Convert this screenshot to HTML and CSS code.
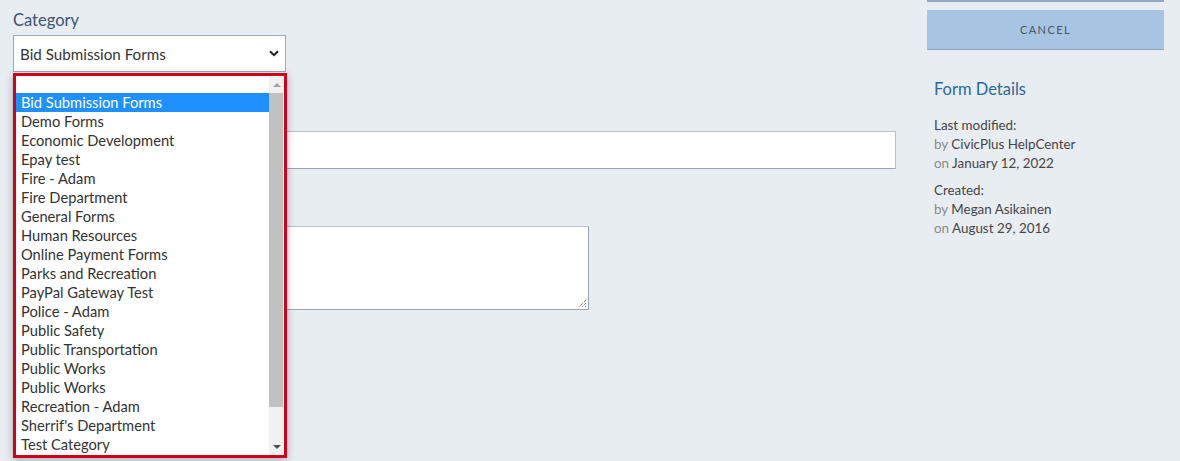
FILE: index.html
```html
<!DOCTYPE html>
<html>
<head>
<meta charset="utf-8">
<link rel="stylesheet" href="styles.css">
</head>
<body>
<div class="page">
  <div class="main">
    <div class="label">Category</div>
    <div class="select-wrap">
      <div class="select">
        <span class="select-value">Bid Submission Forms</span>
        <svg class="chev" width="10" height="7" viewBox="0 0 10 7"><path d="M1 1.2 L5 5.2 L9 1.2" fill="none" stroke="#222" stroke-width="2"/></svg>
      </div>
      <div class="dropdown">
        <div class="options">
          <div class="opt blank"></div>
          <div class="opt selected">Bid Submission Forms</div>
          <div class="opt">Demo Forms</div>
          <div class="opt">Economic Development</div>
          <div class="opt">Epay test</div>
          <div class="opt">Fire - Adam</div>
          <div class="opt">Fire Department</div>
          <div class="opt">General Forms</div>
          <div class="opt">Human Resources</div>
          <div class="opt">Online Payment Forms</div>
          <div class="opt">Parks and Recreation</div>
          <div class="opt">PayPal Gateway Test</div>
          <div class="opt">Police - Adam</div>
          <div class="opt">Public Safety</div>
          <div class="opt">Public Transportation</div>
          <div class="opt">Public Works</div>
          <div class="opt">Public Works</div>
          <div class="opt">Recreation - Adam</div>
          <div class="opt">Sherrif's Department</div>
          <div class="opt">Test Category</div>
        </div>
        <div class="scrollbar">
          <div class="arrow up"></div>
          <div class="track"><div class="thumb"></div></div>
          <div class="arrow down"></div>
        </div>
      </div>
    </div>
    <div class="input"></div>
    <div class="textarea">
      <svg class="grip" width="9" height="9" viewBox="0 0 9 9"><path d="M8 1 L1 8 M8 4 L4 8 M8 7 L7 8" stroke="#555" stroke-width="1" stroke-dasharray="1 1"/></svg>
    </div>
  </div>
  <div class="side">
    <div class="topbar"></div>
    <div class="cancel">CANCEL</div>
    <div class="details">
      <div class="details-title">Form Details</div>
      <div class="meta">
        <div class="meta-head">Last modified:</div>
        <div><span class="muted">by</span> CivicPlus HelpCenter</div>
        <div><span class="muted">on</span> January 12, 2022</div>
      </div>
      <div class="meta">
        <div class="meta-head">Created:</div>
        <div><span class="muted">by</span> Megan Asikainen</div>
        <div><span class="muted">on</span> August 29, 2016</div>
      </div>
    </div>
  </div>
</div>
</body>
</html>
```
FILE: styles.css
```css
html, body {
  margin: 0;
  padding: 0;
}
body {
  background: #e8edf2;
  font-family: Lato, "Open Sans", sans-serif;
  width: 1180px;
  height: 461px;
  overflow: hidden;
}
.page {
  display: flex;
}
.main {
  width: 883px;
  padding-left: 13px;
  padding-top: 10px;
}
.label {
  font-size: 16.5px;
  line-height: 20px;
  color: #3d5470;
  margin-bottom: 5px;
}
.select-wrap {
  position: relative;
  width: 273px;
}
.select {
  box-sizing: border-box;
  height: 37px;
  width: 273px;
  border: 1px solid #90acc9;
  background: #fff;
  display: flex;
  align-items: center;
  justify-content: space-between;
  padding: 0 4px 0 6px;
  font-size: 15.2px;
  color: #333;
}
.select-value {
  margin-top: 1px;
}
.chev {
  margin-right: 2px;
}
.dropdown {
  position: absolute;
  z-index: 5;
  top: 38px;
  left: 0;
  box-sizing: border-box;
  width: 274px;
  height: 385px;
  border: 3px solid #d0021b;
  background: #fff;
  box-shadow: 0 2px 8px rgba(0, 0, 0, 0.28);
  display: flex;
}
.options {
  flex: 1;
}
.opt {
  height: 19px;
  line-height: 19px;
  font-size: 14.7px;
  color: #333;
  padding-left: 5px;
  white-space: nowrap;
}
.opt.blank {
  height: 17px;
}
.opt.selected {
  background: #1e90ff;
  color: #fff;
}
.scrollbar {
  width: 15px;
  background: #f1f1f1;
  display: flex;
  flex-direction: column;
}
.arrow {
  height: 17px;
  display: flex;
  align-items: center;
  justify-content: center;
}
.arrow.up::before {
  content: "";
  border-left: 4px solid transparent;
  border-right: 4px solid transparent;
  border-bottom: 4px solid #a3a3a3;
}
.arrow.down::before {
  content: "";
  border-left: 4px solid transparent;
  border-right: 4px solid transparent;
  border-top: 4px solid #505050;
}
.track {
  flex: 1;
}
.thumb {
  margin: 0 1px 0 0;
  height: 314px;
  background: #c1c1c1;
}
.input {
  box-sizing: border-box;
  margin-top: 59px;
  width: 883px;
  height: 38px;
  background: #fff;
  border: 1px solid #b9c4cf;
  border-bottom-color: #9aa5b0;
}
.textarea {
  position: relative;
  box-sizing: border-box;
  margin-top: 57px;
  width: 576px;
  height: 84px;
  background: #fff;
  border: 1px solid #b6c2cf;
  border-right-color: #9ba6b1;
  border-bottom-color: #9ba6b1;
}
.grip {
  position: absolute;
  right: 1px;
  bottom: 1px;
}
.side {
  margin-left: 31px;
  width: 237px;
}
.topbar {
  height: 2px;
  background: #8fa7c3;
}
.cancel {
  margin-top: 8px;
  height: 39px;
  line-height: 39px;
  background: #a7c5e3;
  border-bottom: 1px solid #8ea7c1;
  text-align: center;
  font-size: 11px;
  letter-spacing: 1.4px;
  color: #4a5560;
}
.details {
  padding-left: 7px;
  padding-top: 29px;
}
.details-title {
  font-size: 16.5px;
  line-height: 20px;
  color: #2c6a9c;
  margin-bottom: 17px;
}
.meta {
  font-size: 13.4px;
  line-height: 19px;
  color: #454545;
  margin-bottom: 8px;
}
.muted {
  color: #8a8a8a;
}
```
